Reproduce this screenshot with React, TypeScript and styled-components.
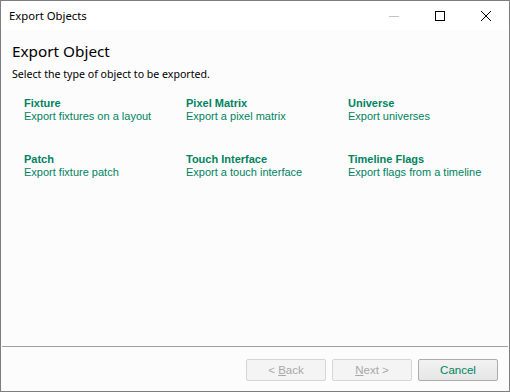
import React from "react";
import styled, { createGlobalStyle } from "styled-components";

const Global = createGlobalStyle`
  html, body { margin: 0; padding: 0; background: #6b6b6b; }
  body { width: 510px; height: 392px; overflow: hidden; }
`;

const Window = styled.div`
  box-sizing: border-box;
  width: 510px;
  height: 392px;
  border: 1px solid #7d7d7d;
  background: #fcfcfc;
  display: flex;
  flex-direction: column;
  font-family: "Noto Sans", "Open Sans", sans-serif;
`;

const TitleBar = styled.div`
  height: 29px;
  background: #ffffff;
  display: flex;
  align-items: center;
  padding-left: 8px;
`;

const TitleText = styled.div`
  flex: 1;
  font-size: 11.3px;
  color: #000;
`;

const Controls = styled.div`
  display: flex;
  height: 29px;
`;

const CtrlButton = styled.div`
  width: 46px;
  height: 29px;
  display: flex;
  align-items: center;
  justify-content: center;
`;

const Content = styled.div`
  flex: 1;
  padding: 10px 0 0 11px;
  display: flex;
  flex-direction: column;
`;

const Heading = styled.h1`
  margin: 0;
  font-weight: normal;
  font-size: 15.3px;
  line-height: 22px;
  color: #000;
`;

const Sub = styled.div`
  margin-top: 4px;
  font-size: 10.6px;
  line-height: 16px;
  color: #000;
`;

const Grid = styled.div`
  display: grid;
  grid-template-columns: 162px 162px 162px;
  grid-auto-rows: 56px;
  margin: 15px 0 0 12px;
`;

const Item = styled.div`
  display: flex;
  flex-direction: column;
  font-family: "Liberation Sans", Arial, sans-serif;
  font-size: 11px;
  line-height: 13px;
  color: #00835f;
  cursor: pointer;
`;

const ItemTitle = styled.div`
  font-weight: bold;
`;

const Separator = styled.div`
  height: 1px;
  background: #a0a0a0;
  margin: 0 1px;
`;

const Footer = styled.div`
  height: 44px;
  display: flex;
  justify-content: flex-end;
  align-items: flex-start;
  gap: 6px;
  padding: 12px 11px 0 0;
  box-sizing: border-box;
`;

const Button = styled.div<{ $disabled?: boolean }>`
  box-sizing: border-box;
  width: 80px;
  height: 22px;
  border-radius: 2px;
  border: 1px solid ${(p) => (p.$disabled ? "#d5d5d5" : "#acacac")};
  background: ${(p) =>
    p.$disabled ? "#f4f4f4" : "linear-gradient(#f2f2f2, #e6e6e6)"};
  color: ${(p) => (p.$disabled ? "#a8a8a8" : "#00835f")};
  font-family: "Liberation Sans", Arial, sans-serif;
  font-size: 11.5px;
  display: flex;
  align-items: center;
  justify-content: center;
`;

const items = [
  ["Fixture", "Export fixtures on a layout"],
  ["Pixel Matrix", "Export a pixel matrix"],
  ["Universe", "Export universes"],
  ["Patch", "Export fixture patch"],
  ["Touch Interface", "Export a touch interface"],
  ["Timeline Flags", "Export flags from a timeline"],
];

export default function App() {
  return (
    <>
      <Global />
      <Window>
        <TitleBar>
          <TitleText>Export Objects</TitleText>
          <Controls>
            <CtrlButton>
              <svg width="10" height="10" viewBox="0 0 10 10">
                <line x1="0" y1="5.5" x2="10" y2="5.5" stroke="#c4c4c4" strokeWidth="1" />
              </svg>
            </CtrlButton>
            <CtrlButton>
              <svg width="10" height="10" viewBox="0 0 10 10">
                <rect x="0.5" y="0.5" width="9" height="9" fill="none" stroke="#000" strokeWidth="1" />
              </svg>
            </CtrlButton>
            <CtrlButton>
              <svg width="10" height="10" viewBox="0 0 10 10">
                <path d="M0 0 L10 10 M10 0 L0 10" stroke="#000" strokeWidth="1" />
              </svg>
            </CtrlButton>
          </Controls>
        </TitleBar>
        <Content>
          <Heading>Export Object</Heading>
          <Sub>Select the type of object to be exported.</Sub>
          <Grid>
            {items.map(([t, d]) => (
              <Item key={t}>
                <ItemTitle>{t}</ItemTitle>
                <div>{d}</div>
              </Item>
            ))}
          </Grid>
        </Content>
        <Separator />
        <Footer>
          <Button $disabled>
            &lt;&nbsp;<u>B</u>ack
          </Button>
          <Button $disabled>
            <u>N</u>ext&nbsp;&gt;
          </Button>
          <Button>Cancel</Button>
        </Footer>
      </Window>
    </>
  );
}
